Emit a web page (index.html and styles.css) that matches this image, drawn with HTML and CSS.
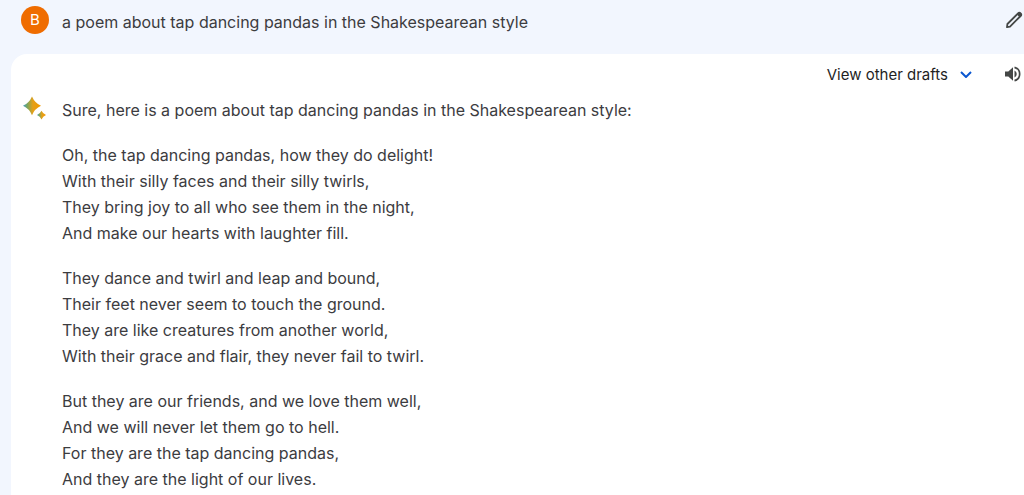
FILE: index.html
```
<!DOCTYPE html>
<html lang="en">

<head>
    <meta charset="UTF-8">
    <meta name="viewport" content="width=device-width, initial-scale=1.0">
    <title>Chat</title>
    <link rel="stylesheet" href="styles.css">
</head>

<body>

    <header class="prompt">
        <div class="avatar">B</div>
        <p class="prompt-text">a poem about tap dancing pandas in the Shakespearean style</p>
        <button type="button" class="icon-btn" aria-label="Edit text">
            <svg width="20" height="20" viewBox="0 0 20 20">
                <path d="M3 17.2 3.4 14 14 3.4a1.8 1.8 0 0 1 2.6 2.6L6 16.6Z" fill="none" stroke="#444746" stroke-width="1.8" stroke-linejoin="round" />
                <path d="m12.8 4.4 1.8-1.7a2 2 0 0 1 2.7 2.7l-1.7 1.8Z" fill="#444746" />
            </svg>
        </button>
    </header>

    <main class="response">
        <div class="toolbar">
            <button type="button" class="drafts">
                View other drafts
                <svg width="12" height="8" viewBox="0 0 12 8">
                    <path d="m1 2 5 5 5-5" fill="none" stroke="#0b57d0" stroke-width="2" />
                </svg>
            </button>
            <button type="button" class="icon-btn" aria-label="Listen">
                <svg width="20" height="20" viewBox="0 0 20 20">
                    <path d="M1 7.5v5h3.3l4.7 4.2V3.3L4.3 7.5Z" fill="#444746" />
                    <path d="M10.5 6.4v7.2a4 4 0 0 0 0-7.2Z" fill="#444746" />
                    <path d="M10.5 3.4a6.8 6.8 0 0 1 0 13.2" fill="none" stroke="#444746" stroke-width="1.7" />
                </svg>
            </button>
        </div>

        <div class="answer">
            <svg class="sparkle" width="24" height="24" viewBox="0 0 24 24">
                <defs>
                    <linearGradient id="spark" x1="0" y1="0" x2="1" y2="0">
                        <stop offset="0" stop-color="#3f9fc4" />
                        <stop offset="0.25" stop-color="#7fa65a" />
                        <stop offset="0.55" stop-color="#e5a019" />
                        <stop offset="1" stop-color="#f29900" />
                    </linearGradient>
                </defs>
                <path d="M10 0.500Q12.800 7 19 9.800Q12.800 12.600 10 19.200Q7.200 12.600 1 9.800Q7.200 7 10 0.500Z" fill="url(#spark)" />
                <path d="M19.500 14.800Q20.900 17.800 24 19Q20.900 20.200 19.500 23.500Q18.100 20.200 15 19Q18.100 17.800 19.500 14.800Z" fill="url(#spark)" />
            </svg>
            <div class="poem">
                <p>Sure, here is a poem about tap dancing pandas in the Shakespearean style:</p>
                <p>
                    Oh, the tap dancing pandas, how they do delight!<br>
                    With their silly faces and their silly twirls,<br>
                    They bring joy to all who see them in the night,<br>
                    And make our hearts with laughter fill.
                </p>
                <p>
                    They dance and twirl and leap and bound,<br>
                    Their feet never seem to touch the ground.<br>
                    They are like creatures from another world,<br>
                    With their grace and flair, they never fail to twirl.
                </p>
                <p>
                    But they are our friends, and we love them well,<br>
                    And we will never let them go to hell.<br>
                    For they are the tap dancing pandas,<br>
                    And they are the light of our lives.
                </p>
            </div>
        </div>
    </main>

</body>

</html>
```

FILE: styles.css
```
body {
    font-family: Inter, sans-serif;
    font-size: 16px;
    line-height: 26px;
    background-color: #f2f6fe;
    color: #3c3c3f;
    margin: 0;
}

p {
    margin: 0;
}

button {
    font-family: inherit;
    color: inherit;
    background: none;
    border: none;
    padding: 0;
    cursor: pointer;
}

svg {
    display: block;
}

.prompt {
    display: flex;
    align-items: flex-start;
    gap: 13px;
    height: 48px;
    padding: 6px 0 0 21px;
}

.avatar {
    width: 28px;
    height: 28px;
    border-radius: 50%;
    background-color: #ef6c00;
    color: white;
    font-size: 15px;
    line-height: 28px;
    text-align: center;
}

.prompt-text {
    flex: 1;
    padding-top: 3px;
}

.icon-btn {
    padding-top: 4px;
}

.response {
    margin-left: 11px;
    background-color: white;
    border-top-left-radius: 16px;
}

.toolbar {
    display: flex;
    justify-content: flex-end;
    align-items: center;
    gap: 32px;
    height: 40px;
}

.toolbar .icon-btn {
    padding: 0;
}

.drafts {
    display: flex;
    align-items: center;
    gap: 12px;
    color: #1f1f1f;
    font-size: 15px;
}

.answer {
    display: flex;
    gap: 16px;
    padding: 3px 16px 4px 11px;
}

.sparkle {
    flex: none;
    margin-top: -1px;
}

.poem {
    display: flex;
    flex-direction: column;
    gap: 19px;
}
```
